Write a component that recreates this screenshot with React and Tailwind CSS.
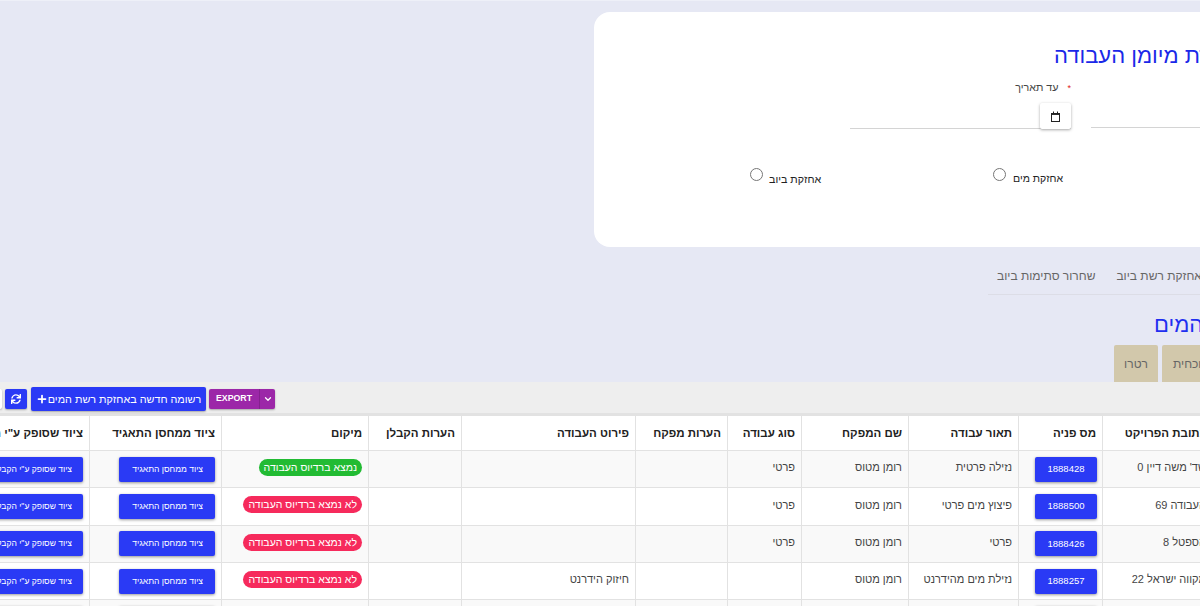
import React from 'react';
import { Plus, ChevronDown } from 'lucide-react';
import { FaSync } from 'react-icons/fa';

const rows = [
  { h: 'h-[37px]', address: "שד' משה דיין 0", id: '1888428', desc: 'נזילה פרטית', type: 'פרטי', details: '', found: true },
  { h: 'h-[37.5px]', address: 'העבודה 69', id: '1888500', desc: 'פיצוץ מים פרטי', type: 'פרטי', details: '', found: false },
  { h: 'h-[37.5px]', address: 'הספטל 8', id: '1888426', desc: 'פרטי', type: 'פרטי', details: '', found: false },
  { h: 'h-[37px]', address: 'מקווה ישראל 22', id: '1888257', desc: 'נזילת מים מהידרנט', type: '', details: 'חיזוק הידרנט', found: false },
  { h: 'h-[37px]', address: 'הרצל 12', id: '1888255', desc: 'פרטי', type: 'פרטי', details: '', found: false },
];

const columns = [
  ['כתובת הפרויקט', 'w-[110px]'],
  ['מס פניה', 'w-[84px]'],
  ['תאור עבודה', 'w-[110px]'],
  ['שם המפקח', 'w-[107px]'],
  ['סוג עבודה', 'w-[74px]'],
  ['הערות מפקח', 'w-[92px]'],
  ['פירוט העבודה', 'w-[174px]'],
  ['הערות הקבלן', 'w-[93px]'],
  ['מיקום', 'w-[147px]'],
  ['ציוד ממחסן התאגיד', 'w-[132px]'],
  ['ציוד שסופק ע"י הקבלן', 'w-[139px]'],
];

const cell = 'border border-[#e2e2e2] px-[6px] text-right align-middle whitespace-nowrap overflow-hidden';
const textCell = `${cell} pb-[3px]`;
const blueBtn = 'h-[25px] rounded-[2px] bg-[#2a3af5] text-white shadow-[0_1px_3px_rgba(0,0,0,0.4)] whitespace-nowrap';

const Table = () => (
  <table dir="rtl" className="-ml-[50px] w-[1262px] table-fixed border-collapse text-[11px] text-[#444]">
    <thead>
      <tr className="h-[35px] bg-white">
        {columns.map(([label, width]) => (
          <th key={label} className={`${width} ${cell} pt-[1px] font-bold text-[11.5px] text-[#222]`}>{label}</th>
        ))}
      </tr>
    </thead>
    <tbody>
      {rows.map((row) => (
        <tr key={row.id} className={`${row.h} odd:bg-[#f9f9f9] even:bg-white`}>
          <td className={textCell}>{row.address}</td>
          <td className={cell}>
            <button className={`${blueBtn} block w-[62px] mr-[-1px] text-[9.5px]`}>{row.id}</button>
          </td>
          <td className={textCell}>{row.desc}</td>
          <td className={textCell}>רומן מטוס</td>
          <td className={textCell}>{row.type}</td>
          <td className={textCell}></td>
          <td className={textCell}>{row.details}</td>
          <td className={textCell}></td>
          <td className={textCell}>
            {row.found ? (
              <span className="inline-block h-[17px] rounded-full bg-[#22bb33] px-[5px] text-[10.5px] leading-[17px] text-white">נמצא ברדיוס העבודה</span>
            ) : (
              <span className="inline-block h-[17px] rounded-full bg-[#f62a5c] px-[5px] text-[10.5px] leading-[17px] text-white">לא נמצא ברדיוס העבודה</span>
            )}
          </td>
          <td className={cell}>
            <button className={`${blueBtn} block w-[96px] pr-[12px] text-right text-[8.5px]`}>ציוד ממחסן התאגיד</button>
          </td>
          <td className={cell}>
            <button className={`${blueBtn} block w-[133px] pr-[11px] text-right text-[8.5px]`}>ציוד שסופק ע"י הקבלן</button>
          </td>
        </tr>
      ))}
    </tbody>
  </table>
);

const Toolbar = () => (
  <div className="flex h-[33px] items-center border-b-2 border-[#e2e2e2] bg-[#eeeeee] pt-[3px]">
    <div className="h-[20px] w-[2px] rounded-r-[2px] bg-white shadow-[0_1px_2px_rgba(0,0,0,0.3)]"></div>
    <button className="ml-[3px] flex h-[20px] w-[22px] items-center justify-center rounded-[2px] bg-[#2a3af5] text-white shadow-[0_1px_2px_rgba(0,0,0,0.3)]">
      <FaSync size={10} />
    </button>
    <button dir="rtl" className="ml-[4px] flex h-[24px] w-[175px] items-center justify-center rounded-[2px] bg-[#2a3af5] text-[10.8px] text-white shadow-[0_1px_2px_rgba(0,0,0,0.3)]">
      רשומה חדשה באחזקת רשת המים
      <Plus size={12} strokeWidth={3.5} />
    </button>
    <div className="ml-[3px] flex h-[20px] w-[66px] rounded-[2px] bg-[#9c27a8] text-white shadow-[0_1px_2px_rgba(0,0,0,0.3)]">
      <span className="flex w-[50px] items-center justify-center text-[8.8px] font-bold">EXPORT</span>
      <span className="flex flex-1 items-center justify-center border-l border-[#85208f]">
        <ChevronDown size={10} strokeWidth={3} />
      </span>
    </div>
  </div>
);

export default function App() {
  return (
    <div className="h-[606px] w-[1200px] overflow-hidden border-t border-[#eef0f8] bg-[#e6e8f4] font-['Liberation_Sans',sans-serif]">
      {/* filter card, runs off the right edge */}
      <div className="ml-[594px] mt-[11px] h-[235px] w-[800px] rounded-[16px] bg-white pt-[31px]">
        <h2 dir="rtl" className="ml-[460px] w-fit whitespace-nowrap text-[22px] leading-[26px] text-[#1a28e8]">בחירת מיומן העבודה</h2>
        <div className="ml-[256px] mt-[11px] flex gap-[20px]">
          <div dir="rtl" className="w-[221px]">
            <div className="text-[10.7px] leading-[14px] text-[#444]">
              <span className="text-[9px] text-[#e02020]">*</span>
              <span className="mr-[9px]">עד תאריך</span>
            </div>
            <div className="mt-[8px] h-[26px] border-b border-[#d4d4d4]">
              <button className="flex h-[26px] w-[31px] items-center justify-center rounded-[2px] bg-white shadow-[0_1px_3px_rgba(0,0,0,0.35)]">
                <svg width="9" height="11" viewBox="0 0 9 11" fill="none" stroke="#222" strokeWidth="1">
                  <rect x="0.5" y="2.5" width="8" height="8" />
                  <path d="M0.5 3.2h8" strokeWidth="1.5" />
                  <path d="M2.5 0.5v2M6.5 0.5v2" />
                </svg>
              </button>
            </div>
          </div>
          <div className="h-[48px] w-[300px] border-b border-[#d4d4d4]"></div>
        </div>
        <div className="ml-[156px] mt-[39px] flex">
          <label className="flex w-[243px] items-start gap-[6px]">
            <input type="radio" name="kind" className="h-[13px] w-[13px]" />
            <span className="mt-[3px] whitespace-nowrap text-[10.7px] text-[#222]">אחזקת ביוב</span>
          </label>
          <label className="flex items-start gap-[7px]">
            <input type="radio" name="kind" className="h-[13px] w-[13px]" />
            <span className="mt-[3px] whitespace-nowrap text-[10.5px] text-[#222]">אחזקת מים</span>
          </label>
        </div>
      </div>

      {/* tabs */}
      <div dir="rtl" className="ml-[988px] mt-[11px] flex h-[37px] w-[400px] items-center justify-end gap-[3px] border-b border-[#dcdde6] text-[12px] text-[#666]">
        <span className="whitespace-nowrap px-[9px]">אחזקת רשת ביוב</span>
        <span className="whitespace-nowrap px-[9px]">שחרור סתימות ביוב</span>
      </div>

      <h2 dir="rtl" className="ml-[1154px] mt-[17px] w-fit whitespace-nowrap text-[22px] leading-[26px] text-[#1f2ff0]">אחזקת רשת המים</h2>

      <div dir="rtl" className="ml-[1114px] mt-[7px] flex w-fit gap-[4px] text-[12px] text-[#666]">
        <button className="flex h-[37px] items-center rounded-t-[2px] bg-[#d2c8ab] px-[11px]">נוכחית</button>
        <button className="flex h-[37px] w-[44px] items-center justify-center rounded-t-[2px] bg-[#d2c8ab]">רטרו</button>
      </div>

      <Toolbar />
      <Table />
    </div>
  );
}
